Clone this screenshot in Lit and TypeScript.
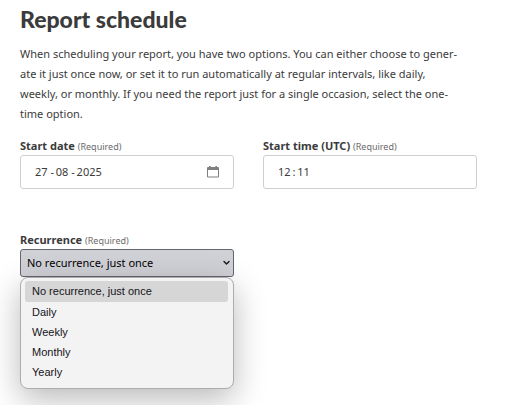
import { LitElement, html, css } from "lit";
import { customElement, state } from "lit/decorators.js";
import { classMap } from "lit/directives/class-map.js";

const OPTIONS = ["No recurrence, just once", "Daily", "Weekly", "Monthly", "Yearly"];

@customElement("app-root")
export class AppRoot extends LitElement {
  @state() private recurrence = OPTIONS[0];

  static styles = css`
    :host {
      display: block;
      box-sizing: border-box;
      min-height: 100vh;
      padding: 5px 49px 16px 20px;
      background: #fff;
      color: #3b3b3b;
      font: 11px/20px "Noto Sans", "Open Sans", sans-serif;
    }
    * {
      box-sizing: border-box;
    }
    .title {
      margin: 0 0 11px;
      font: 900 23px/28px Lato, sans-serif;
    }
    .intro {
      margin: 0;
      padding-right: 15px;
    }
    .fields {
      display: grid;
      grid-template-columns: 1fr 1fr;
      gap: 41px 29px;
      margin-top: 12px;
    }
    .field {
      min-width: 0;
    }
    .label {
      display: block;
      height: 19px;
      white-space: nowrap;
    }
    .name {
      font-weight: 700;
    }
    .required {
      font-size: 9px;
      color: #6b6b6b;
    }
    .box {
      display: flex;
      align-items: center;
      height: 34px;
      padding: 0 14px;
      border: 1px solid #cfcfcf;
      border-radius: 3px;
      background: #fff;
    }
    .input {
      flex: 1;
      min-width: 0;
      padding: 0;
      border: 0;
      outline: 0;
      background: none;
      color: inherit;
      font: inherit;
    }
    .picker {
      display: flex;
      padding: 0;
      border: 0;
      background: none;
      color: #808080;
    }
    .anchor {
      position: relative;
    }
    .select {
      display: block;
      width: 100%;
      height: 28px;
      padding: 0 20px 0 6px;
      border: 1px solid #66646f;
      border-radius: 3px;
      outline: 0;
      appearance: none;
      background: #d0d0d7;
      color: #000;
      font: inherit;
    }
    .chevron {
      position: absolute;
      top: 11px;
      right: 4px;
      pointer-events: none;
    }
    .menu {
      position: absolute;
      top: 100%;
      left: 0;
      right: 0;
      margin: 0;
      padding: 3px 5px 6px 4px;
      border: 1px solid #acacac;
      border-radius: 8px;
      background: #f3f3f3;
      box-shadow: 0 10px 32px rgba(0, 0, 0, 0.28);
      list-style: none;
      color: #15141a;
      font: 11px/20px "Liberation Sans", Arial, sans-serif;
    }
    .option {
      padding: 0 7px;
      border-radius: 3px;
    }
    .option.selected {
      background: #d6d6d6;
      line-height: 21px;
    }
  `;

  private label(id: string, name: string) {
    return html`<label class="label" for=${id}
      ><span class="name">${name}</span> <span class="required">(Required)</span></label
    >`;
  }

  render() {
    return html`
      <h1 class="title">Report schedule</h1>
      <p class="intro">
        When scheduling your report, you have two options. You can either choose to gener&shy;ate it
        just once now, or set it to run automatically at regular intervals, like daily, weekly, or
        monthly. If you need the report just for a single occasion, select the one-time option.
      </p>
      <form class="fields">
        <div class="field">
          ${this.label("date", "Start date")}
          <div class="box">
            <input class="input" id="date" type="text" required .value=${"27 -\u200908 -\u20092025"} />
            <button class="picker" type="button" aria-label="Choose date">
              <svg width="12" height="12" viewBox="0 0 12 12" fill="currentColor" aria-hidden="true">
                <path fill-rule="evenodd" d="M2 0h1.6v1h4.8V0H10v1h1a1 1 0 0 1 1 1v8.6a1 1 0 0 1-1 1H1a1 1 0 0 1-1-1V2a1 1 0 0 1 1-1h1zM1 4v6.6h10V4z" />
              </svg>
            </button>
          </div>
        </div>
        <div class="field">
          ${this.label("time", "Start time (UTC)")}
          <div class="box">
            <input class="input" id="time" type="text" required .value=${"12\u2009:\u200911"} />
          </div>
        </div>
        <div class="field">
          ${this.label("recurrence", "Recurrence")}
          <div class="anchor">
            <select
              class="select"
              id="recurrence"
              required
              .value=${this.recurrence}
              @change=${(e: Event) => (this.recurrence = (e.target as HTMLSelectElement).value)}
            >
              ${OPTIONS.map((o) => html`<option>${o}</option>`)}
            </select>
            <svg class="chevron" width="7" height="6" viewBox="0 0 7 6" fill="none" stroke="#15141a" stroke-width="1.4" stroke-linecap="round" stroke-linejoin="round" aria-hidden="true">
              <path d="M1 1.5 3.5 4 6 1.5" />
            </svg>
            <ul class="menu" role="listbox" aria-label="Recurrence">
              ${OPTIONS.map(
                (o) => html`<li
                  class=${classMap({ option: true, selected: o === this.recurrence })}
                  role="option"
                  aria-selected=${o === this.recurrence}
                  @click=${() => (this.recurrence = o)}
                >
                  ${o}
                </li>`
              )}
            </ul>
          </div>
        </div>
      </form>
    `;
  }
}
